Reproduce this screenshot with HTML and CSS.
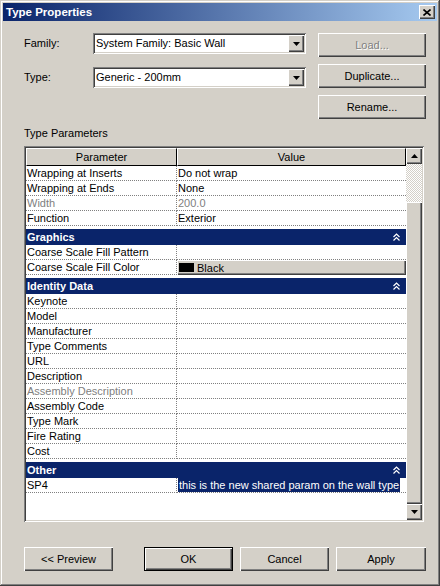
FILE: index.html
```html
<!DOCTYPE html>
<html lang="en">
<head>
    <meta charset="UTF-8">
    <title>Type Properties</title>
    <link rel="stylesheet" href="styles.css">
</head>
<body>
<div class="window">
    <div class="titlebar">
        <span class="title">Type Properties</span>
        <button class="close">
            <svg width="8" height="7" viewBox="0 0 8 7"><path d="M0.5 0.5 L7.5 6.5 M7.5 0.5 L0.5 6.5" stroke="#000" stroke-width="1.6" fill="none"/></svg>
        </button>
    </div>

    <div class="content">
        <div class="top">
            <div class="fields">
                <div class="field">
                    <label>Family:</label>
                    <div class="combo">
                        <span class="combo-text">System Family: Basic Wall</span>
                        <span class="drop"><svg width="7" height="4" viewBox="0 0 7 4"><polygon points="0,0 7,0 3.5,4" fill="#000"/></svg></span>
                    </div>
                </div>
                <div class="field">
                    <label>Type:</label>
                    <div class="combo">
                        <span class="combo-text">Generic - 200mm</span>
                        <span class="drop"><svg width="7" height="4" viewBox="0 0 7 4"><polygon points="0,0 7,0 3.5,4" fill="#000"/></svg></span>
                    </div>
                </div>
            </div>
            <div class="side">
                <button class="btn disabled">Load...</button>
                <button class="btn">Duplicate...</button>
                <button class="btn">Rename...</button>
            </div>
        </div>

        <div class="section-label">Type Parameters</div>

        <div class="grid-box">
            <div class="grid">
                <div class="grid-head"><div>Parameter</div><div>Value</div></div>
                <div class="row"><div>Wrapping at Inserts</div><div>Do not wrap</div></div>
                <div class="row"><div>Wrapping at Ends</div><div>None</div></div>
                <div class="row muted"><div>Width</div><div>200.0</div></div>
                <div class="row"><div>Function</div><div>Exterior</div></div>

                <div class="group">Graphics<svg width="7" height="8" viewBox="0 0 7 8"><path d="M0.5 4 L3.5 1 L6.5 4 M0.5 7.5 L3.5 4.5 L6.5 7.5" stroke="#fff" stroke-width="1.2" fill="none"/></svg></div>
                <div class="row"><div>Coarse Scale Fill Pattern</div><div></div></div>
                <div class="row"><div>Coarse Scale Fill Color</div><div class="btn-cell"><button class="color-btn"><span class="swatch"></span>Black</button></div></div>

                <div class="group">Identity Data<svg width="7" height="8" viewBox="0 0 7 8"><path d="M0.5 4 L3.5 1 L6.5 4 M0.5 7.5 L3.5 4.5 L6.5 7.5" stroke="#fff" stroke-width="1.2" fill="none"/></svg></div>
                <div class="row"><div>Keynote</div><div></div></div>
                <div class="row"><div>Model</div><div></div></div>
                <div class="row"><div>Manufacturer</div><div></div></div>
                <div class="row"><div>Type Comments</div><div></div></div>
                <div class="row"><div>URL</div><div></div></div>
                <div class="row"><div>Description</div><div></div></div>
                <div class="row muted"><div>Assembly Description</div><div></div></div>
                <div class="row"><div>Assembly Code</div><div></div></div>
                <div class="row"><div>Type Mark</div><div></div></div>
                <div class="row"><div>Fire Rating</div><div></div></div>
                <div class="row"><div>Cost</div><div></div></div>

                <div class="group">Other<svg width="7" height="8" viewBox="0 0 7 8"><path d="M0.5 4 L3.5 1 L6.5 4 M0.5 7.5 L3.5 4.5 L6.5 7.5" stroke="#fff" stroke-width="1.2" fill="none"/></svg></div>
                <div class="row"><div>SP4</div><div><span class="selected">this is the new shared param on the wall type</span></div></div>
            </div>
            <div class="scrollbar">
                <div class="sb-btn"><svg width="7" height="4" viewBox="0 0 7 4"><polygon points="3.5,0 7,4 0,4" fill="#000"/></svg></div>
                <div class="sb-track"></div>
                <div class="sb-thumb"></div>
                <div class="sb-btn"><svg width="7" height="4" viewBox="0 0 7 4"><polygon points="0,0 7,0 3.5,4" fill="#000"/></svg></div>
            </div>
        </div>

        <div class="footer">
            <button class="btn preview">&lt;&lt; Preview</button>
            <button class="btn ok">OK</button>
            <button class="btn cancel">Cancel</button>
            <button class="btn apply">Apply</button>
        </div>
    </div>
</div>
</body>
</html>
```

FILE: styles.css
```css
body {
    margin: 0;
    background: #d4d0c8;
    font-family: "Liberation Sans", Arial, sans-serif;
    font-size: 11px;
    color: #000;
}
.window {
    width: 440px;
    height: 586px;
    box-sizing: border-box;
    padding: 3px;
    background: #d4d0c8;
    box-shadow: inset -1px -1px #404040, inset 1px 1px #d4d0c8, inset -2px -2px #808080, inset 2px 2px #fff;
}
.titlebar {
    height: 18px;
    display: flex;
    align-items: center;
    justify-content: space-between;
    padding: 0 2px 0 3px;
    background: linear-gradient(to right, #0a246a, #a6caf0);
    color: #fff;
    font-weight: bold;
    font-size: 11.5px;
}
button {
    font: inherit;
    color: #000;
    background: #d4d0c8;
    border: none;
    padding: 0;
    margin: 0;
}
.close {
    width: 16px;
    height: 14px;
    display: flex;
    align-items: center;
    justify-content: center;
    box-shadow: inset 1px 1px #fff, inset -1px -1px #404040, inset -2px -2px #808080;
}
.content {
    padding: 12px 11px 0 21px;
}
.top {
    display: flex;
    align-items: flex-start;
}
.fields {
    width: 282px;
}
.field {
    display: flex;
    height: 21px;
    margin-bottom: 13px;
}
.field label {
    width: 69px;
    line-height: 21px;
}
.combo {
    width: 213px;
    height: 21px;
    box-sizing: border-box;
    padding: 2px;
    display: flex;
    background: #fff;
    box-shadow: inset 1px 1px #808080, inset -1px -1px #fff, inset 2px 2px #404040, inset -2px -2px #d4d0c8;
}
.combo-text {
    flex: 1;
    line-height: 17px;
    padding-left: 1px;
}
.drop {
    width: 16px;
    height: 17px;
    display: flex;
    align-items: center;
    justify-content: center;
    background: #d4d0c8;
    box-shadow: inset 1px 1px #fff, inset -1px -1px #404040, inset -2px -2px #808080;
}
.side {
    margin-left: 12px;
    display: flex;
    flex-direction: column;
    gap: 7px;
}
.btn {
    width: 108px;
    height: 24px;
    box-sizing: border-box;
    box-shadow: inset 1px 1px #fff, inset -1px -1px #404040, inset -2px -2px #808080;
}
.btn.disabled {
    color: #808080;
    text-shadow: 1px 1px #fff;
}
.section-label {
    margin: 8px 0 6px 0;
    height: 13px;
    line-height: 13px;
}
.grid-box {
    width: 400px;
    height: 376px;
    box-sizing: border-box;
    padding: 2px;
    display: flex;
    box-shadow: inset 1px 1px #808080, inset -1px -1px #fff, inset 2px 2px #404040, inset -2px -2px #d4d0c8;
}
.grid {
    width: 380px;
    background: #fff;
    overflow: hidden;
}
.grid-head {
    display: grid;
    grid-template-columns: 151px 229px;
    height: 18px;
}
.grid-head div {
    box-sizing: border-box;
    background: #d4d0c8;
    border-top: 1px solid #fff;
    border-left: 1px solid #fff;
    border-right: 1px solid #000;
    border-bottom: 1px solid #000;
    text-align: center;
    line-height: 16px;
}
.row {
    display: grid;
    grid-template-columns: 151px 229px;
    height: 15px;
}
.row > div {
    box-sizing: border-box;
    border-bottom: 1px dotted #808080;
    line-height: 14px;
    padding-left: 1px;
    white-space: nowrap;
    overflow: hidden;
}
.row > div:first-child {
    border-right: 1px dotted #808080;
}
.row.muted {
    color: #808080;
}
.row > .btn-cell {
    padding: 0;
    border-bottom: none;
}
.color-btn {
    width: 100%;
    height: 15px;
    display: flex;
    align-items: center;
    text-align: left;
    box-shadow: inset 1px 1px #fff, inset -1px -1px #404040, inset -2px -2px #808080;
}
.swatch {
    width: 15px;
    height: 9px;
    margin: 0 3px 0 2px;
    background: #000;
}
.selected {
    display: inline-block;
    height: 14px;
    padding: 0 1px;
    background: #0a246a;
    color: #fff;
}
.group {
    margin-top: 3px;
    height: 16px;
    display: flex;
    align-items: center;
    justify-content: space-between;
    padding: 0 6px 0 1px;
    background: #0a246a;
    color: #fff;
    font-weight: bold;
}
.scrollbar {
    width: 16px;
    display: flex;
    flex-direction: column;
}
.sb-btn {
    height: 16px;
    display: flex;
    align-items: center;
    justify-content: center;
    background: #d4d0c8;
    box-shadow: inset 1px 1px #fff, inset -1px -1px #404040, inset -2px -2px #808080;
}
.sb-track {
    height: 38px;
    background: repeating-conic-gradient(#fff 0 25%, #d4d0c8 0 50%) 0 0 / 2px 2px;
}
.sb-thumb {
    flex: 1;
    background: #d4d0c8;
    box-shadow: inset 1px 1px #fff, inset -1px -1px #404040, inset -2px -2px #808080;
}
.footer {
    display: flex;
    margin-top: 25px;
}
.footer .btn {
    width: 89px;
}
.footer .preview {
    margin-right: 31px;
}
.footer .ok {
    margin-right: 7px;
    border: 1px solid #000;
}
.footer .cancel {
    margin-right: 7px;
}
.footer .apply {
    width: 90px;
}
```
